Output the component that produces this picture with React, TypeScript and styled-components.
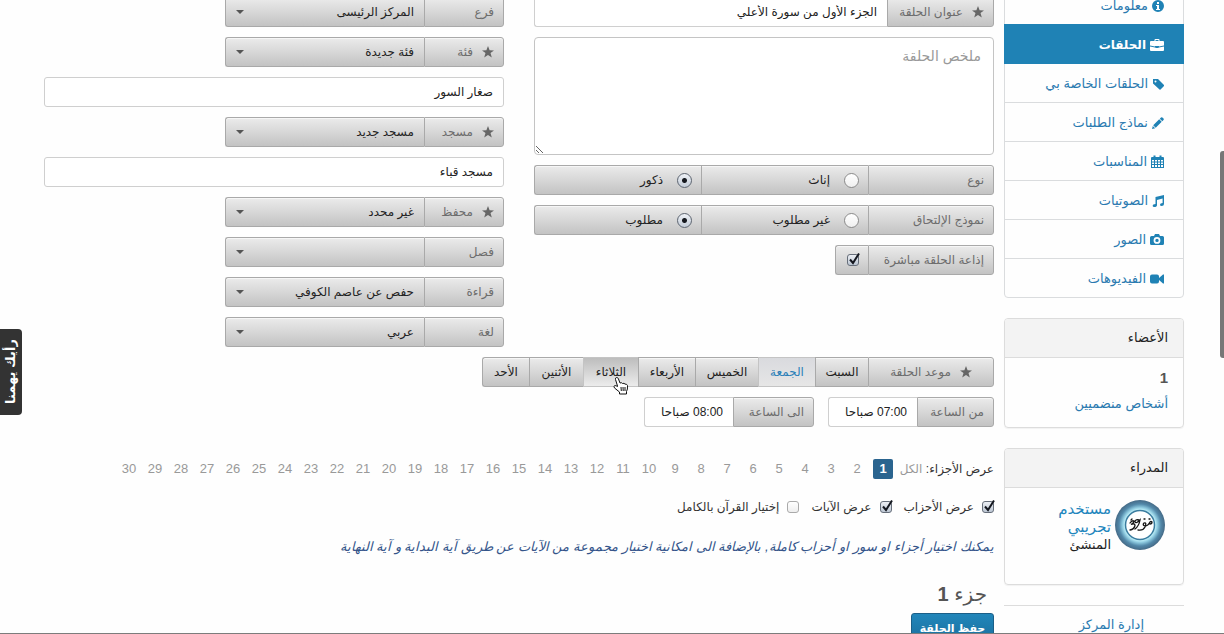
import React, { useState } from "react";
import styled, { createGlobalStyle, css } from "styled-components";

const Global = createGlobalStyle`
  * { box-sizing: border-box; }
  html, body { margin: 0; background: #fefefe; overflow: hidden; }
  body, button, input, select, textarea {
    font-family: "Liberation Sans", "DejaVu Sans", sans-serif;
    font-size: 12px;
    line-height: 20px;
    color: #222;
  }
  a { color: #2a7ab0; text-decoration: none; }
`;

const Page = styled.div`
  direction: rtl;
  position: relative;
  height: 100vh;
  overflow: hidden;
  border-bottom: 1px solid #7c7c7c;
`;

const Shell = styled.div`
  display: grid;
  grid-template-columns: 180px minmax(0, 1fr);
  column-gap: 10px;
  padding: 0 40px 0 44px;
`;

const Sidebar = styled.aside`
  display: flex;
  flex-direction: column;
  gap: 20px;
  margin-top: -15px;
`;

const Nav = styled.nav`
  display: flex;
  flex-direction: column;
  border: 1px solid #dadcde;
  border-radius: 4px;
`;

const NavLink = styled.a<{ $active?: boolean }>`
  display: flex;
  align-items: center;
  gap: 4px;
  height: 39px;
  padding: 2px 19px 0;
  font-size: 13px;
  border-bottom: 1px solid #dadcde;
  &:last-child { height: 38px; border-bottom: 0; }
  svg { color: #1f82b5; }
  ${(p) =>
    p.$active &&
    css`
      height: 40px;
      margin: -1px -1px 0;
      padding: 2px 20px 0;
      background: #1f82b5;
      border-color: #1f82b5;
      color: #fff;
      font-size: 12px;
      font-weight: bold;
      svg { color: #fff; }
    `}
`;

const Panel = styled.section`
  border: 1px solid #dcdcdc;
  border-radius: 4px;
  box-shadow: 0 1px 1px rgba(0, 0, 0, 0.05);
`;

const PanelTitle = styled.h2`
  margin: 0;
  height: 39px;
  padding: 9px 15px;
  background: #f3f3f3;
  border-bottom: 1px solid #dcdcdc;
  border-radius: 3px 3px 0 0;
  font-size: 13px;
  font-weight: normal;
`;

const Members = styled.div`
  display: flex;
  flex-direction: column;
  gap: 6px;
  padding: 10px 15px 13px;
  font-size: 13px;
  strong { font-size: 15px; color: #555; }
`;

const Manager = styled.div`
  display: flex;
  gap: 4px;
  height: 96px;
  padding: 12px 18px;
`;

const ManagerInfo = styled.div`
  display: flex;
  flex-direction: column;
  font-size: 13px;
  line-height: 18px;
  a { color: #1f86bd; width: 60px; font-size: 15px; }
`;

const Footnote = styled.div`
  border-top: 1px solid #dcdcdc;
  padding: 9px 40px;
  font-size: 13px;
`;

const Main = styled.main`
  margin-top: -3px;
  display: flex;
  flex-direction: column;
`;

const Columns = styled.div`
  display: grid;
  grid-template-columns: 1fr 1fr;
  column-gap: 30px;
`;

const Stack = styled.div`
  display: flex;
  flex-direction: column;
  gap: 10px;
`;

const Group = styled.div<{ $width?: string }>`
  display: flex;
  width: ${(p) => p.$width || "auto"};
  height: 30px;
  && > * { border-radius: 0; }
  && > :first-child { border-radius: 0 3px 3px 0; }
  && > :last-child { border-radius: 3px 0 0 3px; }
  && > * + * { border-right-width: 0; }
`;

const metal = css`
  background: linear-gradient(#ebebeb, #c3c3c3);
  border: 1px solid #a9a9a9;
  box-shadow: inset 0 1px 0 #f6f6f6;
`;

const Tag = styled.label<{ $w: number }>`
  ${metal}
  flex: none;
  width: ${(p) => p.$w}px;
  display: flex;
  align-items: center;
  gap: 9px;
  padding: 0 9px;
  color: #6c6c6c;
  white-space: nowrap;
`;

const Legend = styled(Tag).attrs({ as: "span" })<{ $centered?: boolean }>`
  justify-content: ${(p) => (p.$centered ? "center" : "flex-start")};
`;

const TextBox = styled.input`
  min-width: 0;
  width: 100%;
  height: 30px;
  flex: none;
  background: #fff;
  border: 1px solid #cfcfcf;
  border-radius: 3px;
  padding: 0 10px;
  ${Group} & { flex: 1; }
`;

const Summary = styled.textarea`
  display: block;
  width: 100%;
  height: 118px;
  padding: 8px 12px;
  background: #fff;
  border: 1px solid #c4c4c4;
  border-radius: 4px;
  font-size: 14px;
  &::placeholder { color: #999; }
`;

const Choice = styled.label`
  ${metal}
  flex: 1;
  display: flex;
  align-items: center;
  gap: 14px;
  padding: 0 9px;
`;

const RadioDot = styled.input`
  appearance: none;
  flex: none;
  width: 15px;
  height: 15px;
  margin: 0;
  border: 1px solid #8b8b8b;
  border-radius: 50%;
  background: linear-gradient(#fff, #f0f0f0);
  &:checked {
    border-color: #5c6470;
    background: radial-gradient(circle, #15181e 0 2px, transparent 3px), linear-gradient(#eef1f6, #c3ccd8);
  }
`;

const TickWrap = styled.span`
  position: relative;
  display: flex;
  flex: none;
  svg { position: absolute; left: 0; bottom: 0; pointer-events: none; }
`;

const TickBox = styled.input`
  appearance: none;
  width: 12px;
  height: 12px;
  margin: 0;
  border: 1px solid #aaa;
  border-radius: 3px;
  background: linear-gradient(#fff, #eee);
  &:checked { border-color: #666e7a; background: linear-gradient(#eceff4, #bcc6d3); }
  & + svg { display: none; }
  &:checked + svg { display: block; }
`;

const SelectWrap = styled.div`
  ${metal}
  flex: 1;
  position: relative;
  &::after {
    content: "";
    position: absolute;
    left: 10px;
    top: 12px;
    border: 4px solid transparent;
    border-top: 4px solid #555;
    border-bottom: 0;
    pointer-events: none;
  }
`;

const Picker = styled.select`
  appearance: none;
  width: 100%;
  height: 28px;
  padding: 0 10px;
  border: 0;
  background: transparent;
`;

const Day = styled.button<{ $w: number; $state?: "picked" | "pressed" }>`
  ${metal}
  width: ${(p) => p.$w}px;
  padding: 0;
  white-space: nowrap;
  ${(p) => p.$state === "picked" && css`
    color: #2a7fb8;
    background: linear-gradient(#d9dade, #e6e6e6);
    border-color: #c4c4c4;
    box-shadow: none;
  `}
  ${(p) => p.$state === "pressed" && css`
    background: linear-gradient(#bdbdbd, #ececec);
    border-color: #c4c4c4;
    box-shadow: none;
  `}
`;

const Times = styled.div`
  display: flex;
  gap: 14px;
  margin-top: 10px;
`;

const Pager = styled.div`
  display: flex;
  align-items: center;
  gap: 6px;
  margin-top: 32px;
  color: #333;
`;

const PageButton = styled.button<{ $on?: boolean; $wide?: boolean }>`
  width: ${(p) => (p.$wide ? 24 : 20)}px;
  height: 20px;
  flex: none;
  padding: 0;
  border: 0;
  border-radius: 2px;
  background: ${(p) => (p.$on ? "#2a648f" : "transparent")};
  color: ${(p) => (p.$on ? "#fff" : "#999")};
  font-weight: ${(p) => (p.$on ? "bold" : "normal")};
  font-size: ${(p) => (p.$wide ? 12 : 13)}px;
  white-space: nowrap;
`;

const PagerTitle = styled.span`
  width: 65px;
  white-space: nowrap;
`;

const Options = styled.div`
  display: flex;
  gap: 12px;
  margin-top: 18px;
`;

const Option = styled.label`
  display: flex;
  align-items: center;
  gap: 8px;
  color: #333;
  white-space: nowrap;
`;

const Hint = styled.p`
  margin: 20px 0 0;
  font-size: 13px;
  font-style: italic;
  color: #34558a;
  white-space: nowrap;
`;

const PartTitle = styled.h3`
  margin: 24px 7px 6px;
  font-size: 20px;
  line-height: 26px;
  font-weight: normal;
  color: #555;
`;

const Save = styled.button`
  align-self: flex-start;
  width: 83px;
  height: 30px;
  padding: 0;
  border: 1px solid #1b5f88;
  border-radius: 3px;
  background: linear-gradient(#2186ba, #1a6f9e);
  color: #fff;
  font-size: 11px;
  font-weight: bold;
  white-space: nowrap;
`;

const Feedback = styled.button`
  position: absolute;
  left: 0;
  top: 329px;
  width: 22px;
  height: 86px;
  padding: 0;
  border: 0;
  border-radius: 4px 0 0 4px;
  background: #333;
  color: #fff;
  font-weight: bold;
  font-size: 13px;
  line-height: 22px;
  writing-mode: vertical-rl;
  transform: rotate(180deg);
`;

const ScrollThumb = styled.div`
  position: absolute;
  right: 0;
  top: 151px;
  width: 4px;
  height: 207px;
  border-radius: 3px 0 0 3px;
  background: #777;
`;

const Pointer = styled.svg`
  position: absolute;
  left: 613px;
  top: 376px;
`;

const Glyph = ({ children, w = 14 }: { children: React.ReactNode; w?: number }) => (
  <svg width={w} height="14" viewBox={`0 0 ${w} 14`} fill="currentColor" aria-hidden="true">{children}</svg>
);

const icons = {
  info: (
    <Glyph w={12}><path fillRule="evenodd" d="M6 1a6 6 0 1 0 0 12A6 6 0 0 0 6 1zM5 3h2v2H5zM4 6h3v4h1v1H4v-1h1V7H4z" /></Glyph>
  ),
  briefcase: (
    <Glyph><path fillRule="evenodd" d="M4.500 3V2q0-1 1-1h3q1 0 1 1v1H13q1 0 1 1v3.500L9 8.500V8H5v.5L0 7.500V4q0-1 1-1zM5.500 3h3V2h-3zM0 8.500l5 1q2 1 4 0l5-1V12q0 1-1 1H1q-1 0-1-1z" /></Glyph>
  ),
  tag: (
    <Glyph w={12}><path fillRule="evenodd" d="M1 2h5l6 6q.5.5 0 1L8.500 12.500q-.5.5-1 0L1 6.500zM3.500 3.500a1 1 0 1 0 0 2 1 1 0 0 0 0-2z" /></Glyph>
  ),
  pencil: (
    <Glyph w={12}><path d="M9 1.500q.7-.7 1.400 0l1.100 1.100q.7.7 0 1.400l-1.200 1.200L7.800 2.700zM7.200 3.300l2.500 2.500-6 6-2.500-2.500zM.8 9.900l2.400 2.400L0 13z" /></Glyph>
  ),
  calendar: (
    <Glyph w={13}><path fillRule="evenodd" d="M1 2h1.500V.5h2V2h4V.5h2V2H12q1 0 1 1v10H0V3q0-1 1-1zm0 3v1.500h2V5zm3 0v1.500h2V5zm3 0v1.500h2V5zm3 0v1.500h2V5zM1 7.500V9h2V7.500zm3 0V9h2V7.500zm3 0V9h2V7.500zm3 0V9h2V7.500zM1 10v2h2v-2zm3 0v2h2v-2zm3 0v2h2v-2zm3 0v2h2v-2z" /></Glyph>
  ),
  music: (
    <Glyph w={12}><path d="M3.500 3 12 1v8.500Q12 12 9.500 12 8 12 8 10.800 8 9 10.600 9V4.600L5 6v5q0 2-2.800 2Q.7 13 .7 11.900.7 10 3.500 10z" /></Glyph>
  ),
  camera: (
    <Glyph><path fillRule="evenodd" d="M1.500 3H4l1-2h4l1 2h2.500Q14 3 14 4.500v6q0 1.500-1.500 1.500h-11Q0 12 0 10.500v-6Q0 3 1.500 3zM7 4a3.400 3.400 0 1 0 0 6.800A3.400 3.400 0 0 0 7 4zm0 1.700a1.700 1.700 0 1 1 0 3.400 1.700 1.700 0 0 1 0-3.400z" /></Glyph>
  ),
  video: (
    <Glyph><path d="M2 2.500h5q2 0 2 2V6l4-3.500h1v9h-1L9 8v1.500q0 2-2 2H2q-2 0-2-2v-5q0-2 2-2z" /></Glyph>
  ),
};

const Star = () => (
  <svg width="12" height="12" viewBox="0 0 12 12" fill="#666" aria-hidden="true">
    <path d="M6 0l1.600 4.200 4.400.2-3.500 2.700 1.300 4.400L6 9l-3.800 2.500 1.300-4.400L0 4.400l4.400-.2z" />
  </svg>
);

const Tick = ({ label, on, id }: { label?: string; on?: boolean; id?: string }) => (
  <TickWrap>
    <TickBox type="checkbox" id={id} aria-label={label} defaultChecked={on} />
    <svg width="13" height="14" viewBox="0 0 13 14" fill="none" stroke="#14171f" strokeWidth="2" aria-hidden="true">
      <path d="M3 7.500l3 3.500L12 1.500" />
    </svg>
  </TickWrap>
);

const Avatar = () => (
  <svg width="50" height="50" viewBox="0 0 50 50" aria-hidden="true">
    <defs>
      <radialGradient id="halo">
        <stop offset="0.6" stopColor="#c4f3fb" />
        <stop offset="0.7" stopColor="#8fcbe0" />
        <stop offset="0.84" stopColor="#5288a9" />
        <stop offset="1" stopColor="#456a86" />
      </radialGradient>
    </defs>
    <circle cx="25" cy="25" r="25" fill="url(#halo)" />
    <circle cx="25" cy="25" r="14.500" fill="#fff" stroke="#3a7c9f" strokeWidth="1.500" />
    <g fill="none" stroke="#151515" strokeWidth="1.300" strokeLinecap="round">
      <path d="M15 23q2-3 4-2 0 2-3 3.500 4-1.500 4 1-1 4-5 4.500M24 20q-4-1-4 2 1 2 5-2-1 6-5 9M23 30q5 1 7-3 2-5-1-4-2 2 1 3 3 0 5-4 1-1 2 0 0 2-2 2" />
      <path d="M29 19h1M34 19h1M16 20l1-1" />
    </g>
  </svg>
);

const navItems: { icon: keyof typeof icons; text: string; active?: boolean }[] = [
  { icon: "info", text: "معلومات" },
  { icon: "briefcase", text: "الحلقات", active: true },
  { icon: "tag", text: "الحلقات الخاصة بي" },
  { icon: "pencil", text: "نماذج الطلبات" },
  { icon: "calendar", text: "المناسبات" },
  { icon: "music", text: "الصوتيات" },
  { icon: "camera", text: "الصور" },
  { icon: "video", text: "الفيديوهات" },
];

const SelectRow = ({ id, label, value, star }: { id: string; label: string; value: string; star?: boolean }) => (
  <Group $width="279px">
    <Tag $w={80} htmlFor={id}>{star && <Star />}{label}</Tag>
    <SelectWrap>
      <Picker id={id}><option>{value}</option></Picker>
    </SelectWrap>
  </Group>
);

const RadioRow = ({ name, label, options }: { name: string; label: string; options: string[] }) => (
  <Group role="radiogroup" aria-label={label}>
    <Legend $w={126}>{label}</Legend>
    {options.map((o, i) => (
      <Choice key={o}><RadioDot type="radio" name={name} defaultChecked={i === 1} />{o}</Choice>
    ))}
  </Group>
);

const days: { text: string; w: number; state?: "picked" | "pressed" }[] = [
  { text: "السبت", w: 53 },
  { text: "الجمعة", w: 57, state: "picked" },
  { text: "الخميس", w: 63 },
  { text: "الأربعاء", w: 57 },
  { text: "الثلاثاء", w: 55, state: "pressed" },
  { text: "الأثنين", w: 54 },
  { text: "الأحد", w: 47 },
];

export default function App() {
  const [part, setPart] = useState(1);
  return (
    <Page lang="ar">
      <Global />
      <Shell>
        <Sidebar>
          <Nav>
            {navItems.map((n) => (
              <NavLink key={n.text} href="#" $active={n.active}>{icons[n.icon]}{n.text}</NavLink>
            ))}
          </Nav>
          <Panel>
            <PanelTitle>الأعضاء</PanelTitle>
            <Members><strong>1</strong><a href="#">أشخاص منضميين</a></Members>
          </Panel>
          <Panel>
            <PanelTitle>المدراء</PanelTitle>
            <Manager>
              <Avatar />
              <ManagerInfo><a href="#">مستخدم تجريبي</a><span>المنشئ</span></ManagerInfo>
            </Manager>
          </Panel>
          <Footnote><a href="#">إدارة المركز</a></Footnote>
        </Sidebar>

        <Main>
          <Columns>
            <Stack>
              <Group>
                <Tag $w={107} htmlFor="title"><Star />عنوان الحلقة</Tag>
                <TextBox id="title" defaultValue="الجزء الأول من سورة الأعلي" />
              </Group>
              <Summary aria-label="ملخص الحلقة" placeholder="ملخص الحلقة" />
              <RadioRow name="kind" label="نوع" options={["إناث", "ذكور"]} />
              <RadioRow name="join" label="نموذج الإلتحاق" options={["غير مطلوب", "مطلوب"]} />
              <Group $width="159px">
                <Tag $w={126} htmlFor="live">إذاعة الحلقة مباشرة</Tag>
                <Choice as="span"><Tick id="live" on /></Choice>
              </Group>
            </Stack>
            <Stack>
              <SelectRow id="branch" label="فرع" value="المركز الرئيسى" />
              <SelectRow id="category" label="فئة" value="فئة جديدة" star />
              <TextBox aria-label="فئة جديدة" defaultValue="صغار السور" />
              <SelectRow id="mosque" label="مسجد" value="مسجد جديد" star />
              <TextBox aria-label="مسجد جديد" defaultValue="مسجد قباء" />
              <SelectRow id="teacher" label="محفظ" value="غير محدد" star />
              <SelectRow id="class" label="فصل" value="" />
              <SelectRow id="reading" label="قراءة" value="حفص عن عاصم الكوفي" />
              <SelectRow id="language" label="لغة" value="عربي" />
            </Stack>
          </Columns>

          <Times>
            <Group>
              <Legend $w={126} $centered><Star />موعد الحلقة</Legend>
              {days.map((d) => (
                <Day key={d.text} type="button" $w={d.w} $state={d.state}>{d.text}</Day>
              ))}
            </Group>
          </Times>
          <Times>
            <Group $width="166px">
              <Tag $w={77} htmlFor="from">من الساعة</Tag>
              <TextBox id="from" defaultValue="07:00 صباحا" />
            </Group>
            <Group $width="170px">
              <Tag $w={81} htmlFor="to">الى الساعة</Tag>
              <TextBox id="to" defaultValue="08:00 صباحا" />
            </Group>
          </Times>

          <Pager>
            <PagerTitle>عرض الأجزاء:</PagerTitle>
            <PageButton $wide>الكل</PageButton>
            {Array.from({ length: 30 }, (_, i) => i + 1).map((n) => (
              <PageButton key={n} $on={n === part} onClick={() => setPart(n)}>{n}</PageButton>
            ))}
          </Pager>
          <Options>
            <Option><Tick on />عرض الأحزاب</Option>
            <Option><Tick on />عرض الآيات</Option>
            <Option><Tick />إختيار القرآن بالكامل</Option>
          </Options>
          <Hint>يمكنك اختيار أجزاء او سور او أحزاب كاملة, بالإضافة الى امكانية اختيار مجموعة من الآيات عن طريق آية البداية و آية النهاية</Hint>
          <PartTitle>جزء <b>1</b></PartTitle>
          <Save type="button">حفظ الحلقة</Save>
        </Main>
      </Shell>
      <Feedback type="button">رأيك يهمنا</Feedback>
      <ScrollThumb />
      <Pointer width="16" height="19" viewBox="0 0 16 19" fill="#fff" stroke="#111" strokeLinejoin="round" aria-hidden="true">
        <path d="M4.500 10 2.500 3.500q-.3-1.800 1-2t1.900 1.300L7 7q1.800-.8 2.500.5 1.800-.7 2.500.6 1.800-.3 2.500 1.400.3 4-1 6V18H6.500v-2L1.500 12q-1-1.500 0-2.300 1.300-.5 3 .8z" />
        <path d="M8 11l.3 4M10 11l.2 4M12 11v4" />
      </Pointer>
    </Page>
  );
}
